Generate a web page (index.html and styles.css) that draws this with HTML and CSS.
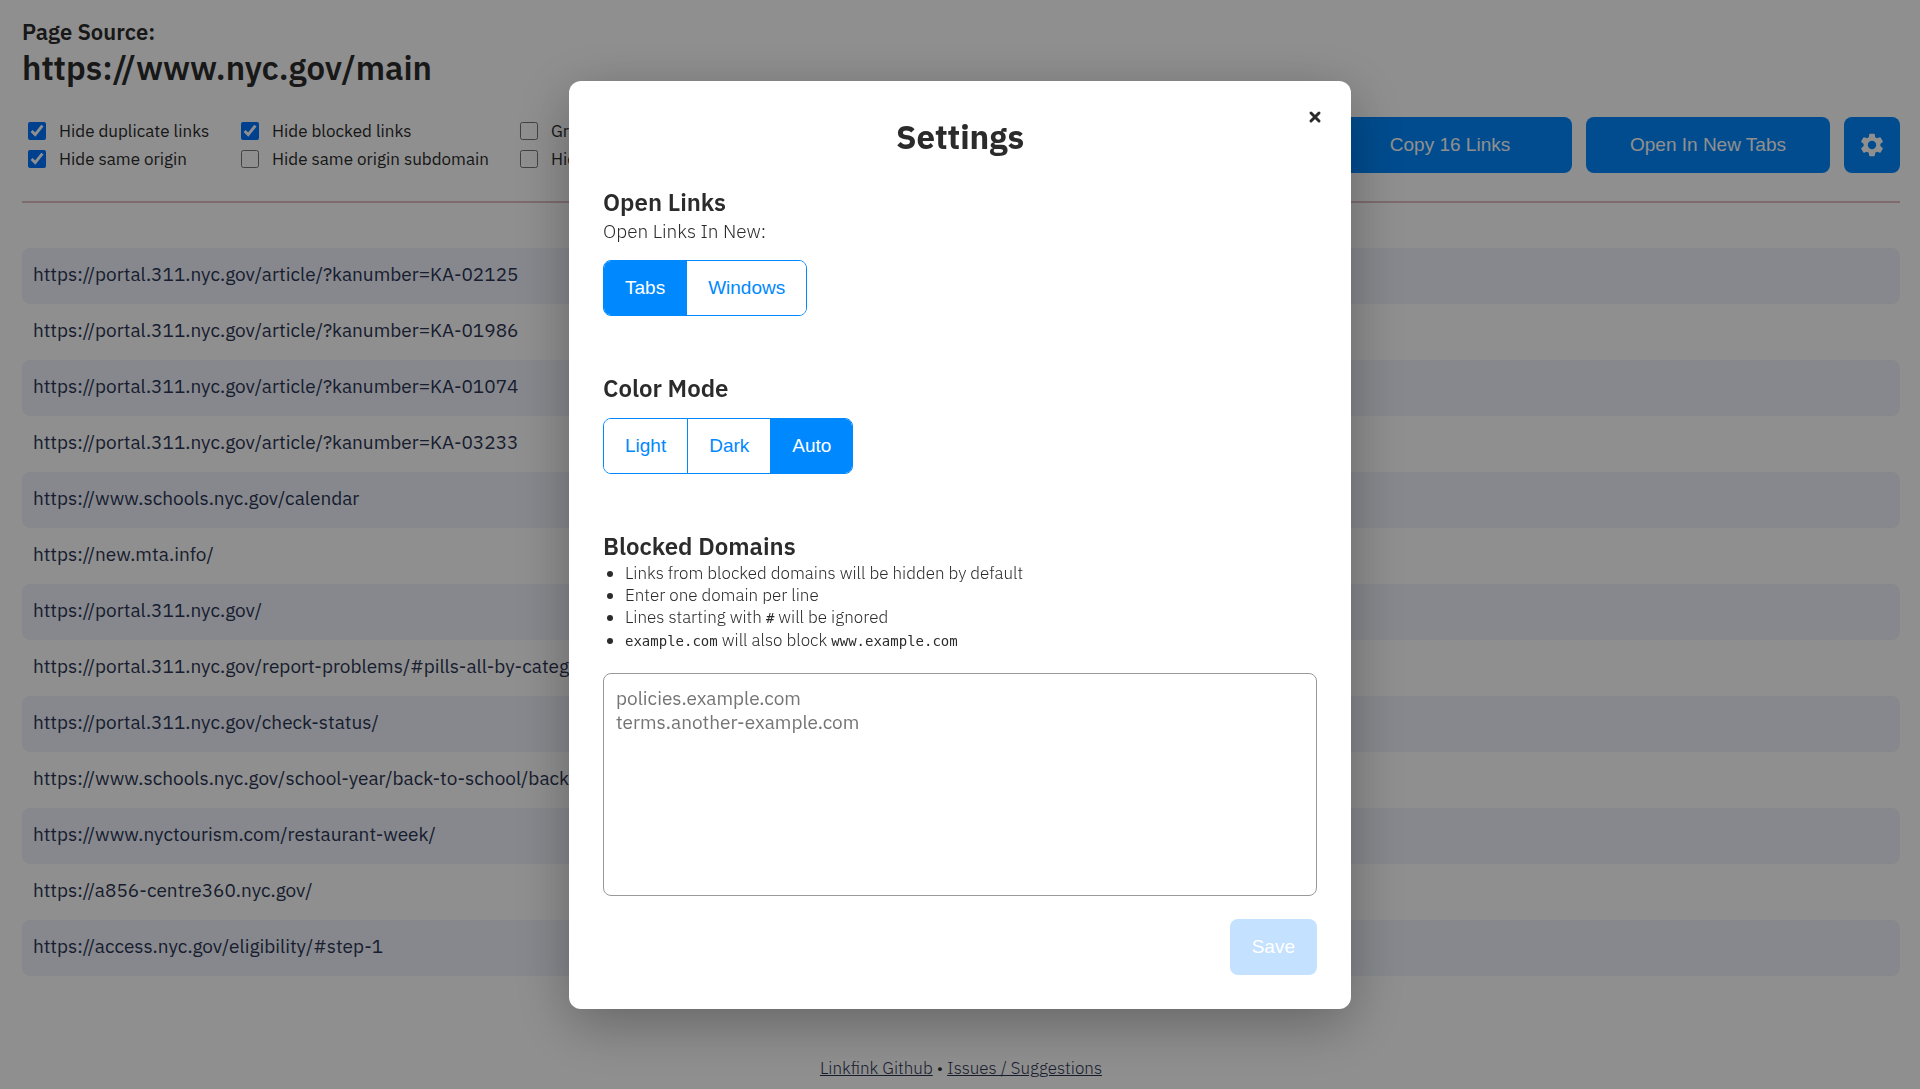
FILE: index.html
```html
<!DOCTYPE html>
<html lang="en">
<head>
  <meta charset="UTF-8">
  <meta name="viewport" content="width=device-width, initial-scale=1.0">
  <title>Linkfink</title>
  <link rel="stylesheet" href="styles.css">
</head>
<body>
  <header>
    <p class="source-label">Page Source:</p>
    <h1>https://www.nyc.gov/main</h1>
    <div class="toolbar">
      <div class="filters">
        <label><input type="checkbox" checked>Hide duplicate links</label>
        <label><input type="checkbox" checked>Hide blocked links</label>
        <label><input type="checkbox">Group by domain</label>
        <label><input type="checkbox" checked>Hide same origin</label>
        <label><input type="checkbox">Hide same origin subdomain</label>
        <label><input type="checkbox">Hide paths</label>
      </div>
      <div class="actions">
        <button class="button button-wide">Copy 16 Links</button>
        <button class="button button-wide">Open In New Tabs</button>
        <button class="button button-icon" aria-label="Settings">
          <svg viewBox="0 0 24 24" width="28" height="28" fill="currentColor">
            <path d="M19.14 12.94c.04-.3.06-.61.06-.94 0-.32-.02-.64-.07-.94l2.03-1.58a.49.49 0 0 0 .12-.61l-1.92-3.32a.49.49 0 0 0-.59-.22l-2.39.96c-.5-.38-1.03-.7-1.62-.94l-.36-2.54a.48.48 0 0 0-.48-.41h-3.84a.47.47 0 0 0-.47.41l-.36 2.54c-.59.24-1.13.57-1.62.94l-2.39-.96a.48.48 0 0 0-.59.22L2.74 8.87a.47.47 0 0 0 .12.61l2.03 1.58c-.05.3-.09.63-.09.94s.02.64.07.94l-2.03 1.58a.49.49 0 0 0-.12.61l1.92 3.32c.12.22.37.29.59.22l2.39-.96c.5.38 1.03.7 1.62.94l.36 2.54c.05.24.24.41.48.41h3.84c.24 0 .44-.17.47-.41l.36-2.54c.59-.24 1.13-.56 1.62-.94l2.39.96c.22.08.47 0 .59-.22l1.92-3.32a.47.47 0 0 0-.12-.61l-2.01-1.58zM12 15.6A3.6 3.6 0 1 1 12 8.4a3.6 3.6 0 0 1 0 7.2z"/>
          </svg>
        </button>
      </div>
    </div>
  </header>

  <main>
    <ul class="links">
      <li><a href="https://portal.311.nyc.gov/article/?kanumber=KA-02125">https://portal.311.nyc.gov/article/?kanumber=KA-02125</a></li>
      <li><a href="https://portal.311.nyc.gov/article/?kanumber=KA-01986">https://portal.311.nyc.gov/article/?kanumber=KA-01986</a></li>
      <li><a href="https://portal.311.nyc.gov/article/?kanumber=KA-01074">https://portal.311.nyc.gov/article/?kanumber=KA-01074</a></li>
      <li><a href="https://portal.311.nyc.gov/article/?kanumber=KA-03233">https://portal.311.nyc.gov/article/?kanumber=KA-03233</a></li>
      <li><a href="https://www.schools.nyc.gov/calendar">https://www.schools.nyc.gov/calendar</a></li>
      <li><a href="https://new.mta.info/">https://new.mta.info/</a></li>
      <li><a href="https://portal.311.nyc.gov/">https://portal.311.nyc.gov/</a></li>
      <li><a href="https://portal.311.nyc.gov/report-problems/#pills-all-by-category">https://portal.311.nyc.gov/report-problems/#pills-all-by-category</a></li>
      <li><a href="https://portal.311.nyc.gov/check-status/">https://portal.311.nyc.gov/check-status/</a></li>
      <li><a href="https://www.schools.nyc.gov/school-year/back-to-school/back-to-school">https://www.schools.nyc.gov/school-year/back-to-school/back-to-school</a></li>
      <li><a href="https://www.nyctourism.com/restaurant-week/">https://www.nyctourism.com/restaurant-week/</a></li>
      <li><a href="https://a856-centre360.nyc.gov/">https://a856-centre360.nyc.gov/</a></li>
      <li><a href="https://access.nyc.gov/eligibility/#step-1">https://access.nyc.gov/eligibility/#step-1</a></li>
    </ul>
  </main>

  <footer>
    <a href="https://github.com/">Linkfink Github</a> • <a href="https://github.com/">Issues / Suggestions</a>
  </footer>

  <div class="overlay">
    <div class="modal" role="dialog" aria-modal="true" aria-labelledby="settings-title">
      <button class="close" aria-label="Close">
        <svg viewBox="0 0 14 14" width="14" height="14" fill="none" stroke="currentColor" stroke-width="3" stroke-linecap="round">
          <path d="M3 3l8 8M11 3L3 11"/>
        </svg>
      </button>
      <h2 id="settings-title">Settings</h2>

      <section>
        <h3>Open Links</h3>
        <p>Open Links In New:</p>
        <div class="button-group">
          <button class="active">Tabs</button>
          <button>Windows</button>
        </div>
      </section>

      <section>
        <h3>Color Mode</h3>
        <div class="button-group">
          <button>Light</button>
          <button>Dark</button>
          <button class="active">Auto</button>
        </div>
      </section>

      <section>
        <h3><label for="blocked">Blocked Domains</label></h3>
        <ul class="help">
          <li>Links from blocked domains will be hidden by default</li>
          <li>Enter one domain per line</li>
          <li>Lines starting with <code>#</code> will be ignored</li>
          <li><code>example.com</code> will also block <code>www.example.com</code></li>
        </ul>
        <textarea id="blocked" placeholder="policies.example.com&#10;terms.another-example.com"></textarea>
      </section>

      <div class="modal-footer">
        <button class="button" disabled>Save</button>
      </div>
    </div>
  </div>
</body>
</html>
```
FILE: styles.css
```css
* {
  box-sizing: border-box;
  margin: 0;
}

body {
  padding: 17px 20px 0 22px;
  background: white;
  color: #2b2b2b;
  font-family: "IBM Plex Sans", Roboto, sans-serif;
  font-size: 17px;
  line-height: 22px;
}

button {
  font-family: "Liberation Sans", Arial, sans-serif;
  font-size: 19px;
  cursor: pointer;
}

.source-label {
  font-size: 22px;
  font-weight: 600;
  line-height: 30px;
}

h1 {
  font-size: 33px;
  font-weight: 600;
  line-height: 42px;
}

.toolbar {
  display: flex;
  justify-content: space-between;
  margin-top: 28px;
  padding-bottom: 28px;
  border-bottom: 2px solid #dfbfc4;
}

.filters {
  display: grid;
  grid-template-columns: 179px 245px auto;
  align-content: start;
  gap: 6px 34px;
  padding: 3px 0 0 6px;
}

.filters label {
  display: flex;
  align-items: center;
  gap: 13px;
  white-space: nowrap;
}

.filters input {
  flex-shrink: 0;
  width: 18px;
  height: 18px;
  margin: 0;
  accent-color: #0075ff;
}

.actions {
  display: flex;
  gap: 14px;
}

.button {
  height: 56px;
  padding: 0 22px;
  border: none;
  border-radius: 8px;
  background: #0088ff;
  color: white;
}

.button:disabled {
  background: #c4e1ff;
  cursor: default;
}

.button-wide {
  width: 244px;
}

.button-icon {
  display: flex;
  align-items: center;
  justify-content: center;
  width: 56px;
  padding: 0;
}

.links {
  margin-top: 45px;
  padding: 0;
  list-style: none;
  font-size: 19px;
}

.links li {
  height: 56px;
  padding: 0 11px;
  border-radius: 8px;
  line-height: 52px;
}

.links li:nth-child(odd) {
  background: #eff3fc;
}

.links a, footer a {
  color: #2c3554;
}

.links a {
  text-decoration: none;
}

footer {
  margin-top: 81px;
  text-align: center;
  font-weight: 300;
}

.overlay {
  position: fixed;
  inset: 0;
  display: flex;
  align-items: center;
  justify-content: center;
  background: rgba(0, 0, 0, 0.44);
}

.modal {
  position: relative;
  width: 782px;
  padding: 34px;
  border-radius: 12px;
  background: white;
  box-shadow: 0 14px 56px rgba(0, 0, 0, 0.3);
}

.close {
  position: absolute;
  top: 22px;
  right: 22px;
  display: flex;
  padding: 7px;
  border: none;
  background: none;
  color: #2b2b2b;
}

h2 {
  margin-bottom: 27px;
  text-align: center;
  font-size: 33px;
  line-height: 44px;
}

section {
  margin-bottom: 56px;
}

section:last-of-type {
  margin-bottom: 23px;
}

h3 {
  font-size: 24px;
  font-weight: 600;
  line-height: 32px;
}

section p {
  margin-bottom: 16px;
  font-size: 19px;
  font-weight: 300;
  line-height: 26px;
}

.button-group {
  display: flex;
  width: max-content;
  margin-top: 14px;
  border: 1px solid #0088ff;
  border-radius: 8px;
  overflow: hidden;
}

.button-group button {
  height: 54px;
  padding: 0 21px;
  border: none;
  background: white;
  color: #0088ff;
}

.button-group button + button {
  border-left: 1px solid #0088ff;
}

.button-group .active {
  background: #0088ff;
  color: white;
}

.help {
  margin-bottom: 21px;
  padding-left: 22px;
  font-weight: 300;
}

code {
  font-family: "DejaVu Sans Mono", monospace;
  font-size: 14px;
  font-weight: 400;
}

textarea {
  display: block;
  width: 100%;
  height: 223px;
  padding: 12px;
  border: 1px solid #999;
  border-radius: 8px;
  font-family: inherit;
  font-size: 19px;
  line-height: 24px;
  resize: none;
}

textarea::placeholder {
  color: #757575;
}

.modal-footer {
  display: flex;
  justify-content: flex-end;
}
```
